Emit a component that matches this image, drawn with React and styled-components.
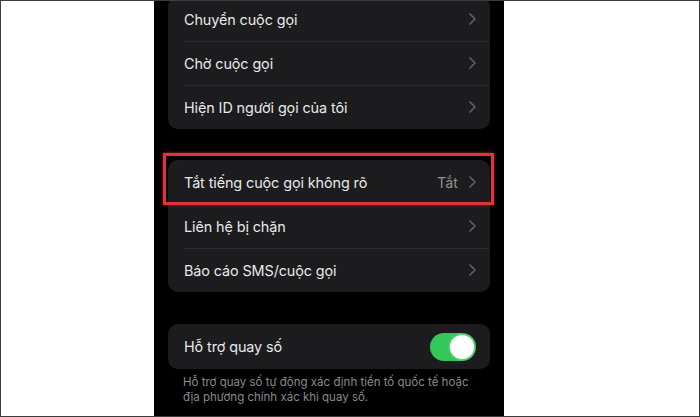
import React from 'react'
import styled, { createGlobalStyle } from 'styled-components'

const GlobalStyle = createGlobalStyle`
  html, body {
    margin: 0;
    padding: 0;
    background: #ffffff;
  }
  body {
    font-family: Inter, "Noto Sans", "Liberation Sans", sans-serif;
  }
`

const Frame = styled.div`
  width: 700px;
  height: 417px;
  box-sizing: border-box;
  border: 1px solid #3c3c3c;
  background: #ffffff;
  overflow: hidden;
  display: flex;
`

const Phone = styled.div`
  width: 350px;
  margin-left: 153px;
  background: #000000;
  padding: 0 14px;
  box-sizing: border-box;
  display: flex;
  flex-direction: column;
`

const Group = styled.div`
  position: relative;
  margin-top: ${(p) => p.$top}px;
`

const Card = styled.div`
  background: #1c1c1e;
  border-radius: 10px;
  overflow: hidden;
`

const Row = styled.div`
  height: ${(p) => p.$h || 44}px;
  display: flex;
  align-items: center;
  padding: 0 14px 0 16px;
  position: relative;

  & + &::before {
    content: '';
    position: absolute;
    top: 0;
    left: 16px;
    right: 0;
    height: 1px;
    background: #2a2a2c;
  }
`

const Label = styled.span`
  flex: 1;
  color: #e8e8e8;
  font-size: 14.4px;
  letter-spacing: -0.1px;
`

const Value = styled.span`
  color: #8e8e93;
  font-size: 14.4px;
  margin-right: 11px;
`

const Highlight = styled.div`
  position: absolute;
  left: -5px;
  right: -4px;
  top: -7px;
  height: 52px;
  border: 3px solid #e0343c;
  box-shadow: 0 0 3px rgba(224, 52, 60, 0.7);
  box-sizing: border-box;
  pointer-events: none;
`

const Toggle = styled.div`
  width: 46px;
  height: 28px;
  border-radius: 14px;
  background: #33c75a;
  display: flex;
  align-items: center;
  justify-content: flex-end;
  padding: 0 2px;
  box-sizing: border-box;
`

const Knob = styled.div`
  width: 24px;
  height: 24px;
  border-radius: 50%;
  background: #ffffff;
  box-shadow: 0 0 3px rgba(255, 255, 255, 0.6);
`

const Footer = styled.p`
  margin: 6px 0 0;
  padding: 0 15px;
  color: #8a8a8e;
  font-size: 11.5px;
  line-height: 15px;
`

const Chevron = () => (
  <svg width="7" height="12" viewBox="0 0 7 12" fill="none">
    <path d="M1 1l5 5-5 5" stroke="#5e5e63" strokeWidth="1.7" strokeLinecap="round" strokeLinejoin="round" />
  </svg>
)

const NavRow = ({ label, value }) => (
  <Row>
    <Label>{label}</Label>
    {value && <Value>{value}</Value>}
    <Chevron />
  </Row>
)

const App = () => (
  <>
    <GlobalStyle />
    <Frame>
      <Phone>
        <Group $top={-4}>
          <Card>
            <NavRow label="Chuyển cuộc gọi" />
            <NavRow label="Chờ cuộc gọi" />
            <NavRow label="Hiện ID người gọi của tôi" />
          </Card>
        </Group>
        <Group $top={31}>
          <Card>
            <NavRow label="Tắt tiếng cuộc gọi không rõ" value="Tắt" />
            <NavRow label="Liên hệ bị chặn" />
            <NavRow label="Báo cáo SMS/cuộc gọi" />
          </Card>
          <Highlight />
        </Group>
        <Group $top={32}>
          <Card>
            <Row $h={45}>
              <Label>Hỗ trợ quay số</Label>
              <Toggle>
                <Knob />
              </Toggle>
            </Row>
          </Card>
          <Footer>
            Hỗ trợ quay số tự động xác định tiền tố quốc tế hoặc địa phương chính xác khi quay số.
          </Footer>
        </Group>
      </Phone>
    </Frame>
  </>
)

export default App
